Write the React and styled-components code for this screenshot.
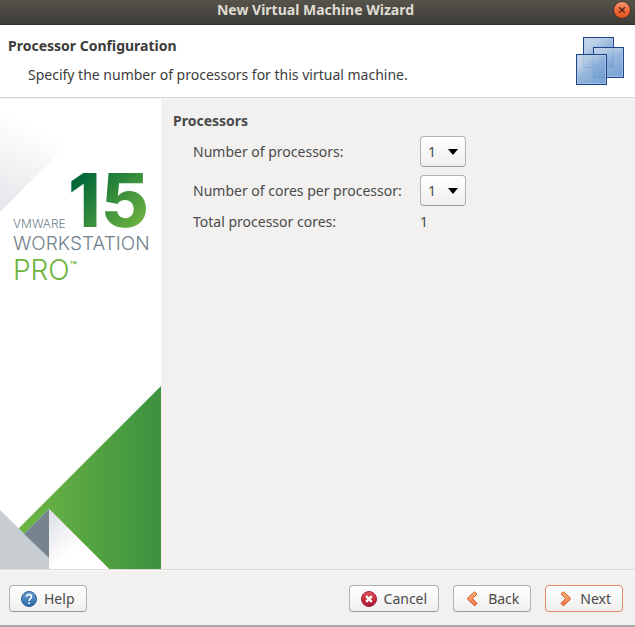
import React from "react";
import styled, { createGlobalStyle, css } from "styled-components";

const GlobalStyle = createGlobalStyle`
  *, *::before, *::after { box-sizing: border-box; }
  body {
    margin: 0;
    background: #f2f1f0;
    color: #4a4a4a;
    font: 14px/20px "Noto Sans", "Open Sans", sans-serif;
  }
`;

const Window = styled.div`
  display: flex;
  flex-direction: column;
  min-height: 100vh;
  border-bottom: 2px solid #a9a8a7;
`;

const TitleBar = styled.header`
  display: grid;
  grid-template-columns: 18px 1fr 22px;
  align-items: center;
  height: 25px;
  padding-bottom: 4px;
  background: linear-gradient(#56534b, #3e3d38);
  border-bottom: 1px solid #33322e;
`;

const Title = styled.h1`
  grid-column: 2;
  margin: 0;
  color: #dfdbd2;
  font-size: 14px;
  line-height: 20px;
  text-align: center;
`;

const CloseButton = styled.button`
  display: flex;
  width: 18px;
  height: 18px;
  padding: 0;
  border: 0;
  background: none;
`;

const Banner = styled.section`
  display: flex;
  justify-content: space-between;
  align-items: center;
  height: 73px;
  padding: 0 10px 0 8px;
  background: #fff;
  border-bottom: 1px solid #d9d8d6;
`;

const BannerText = styled.div`
  padding-bottom: 2px;
`;

const Heading = styled.h2`
  margin: 0;
  color: ${(p) => (p.$muted ? "#4a4a4a" : "#3c3c3c")};
  font-size: 14px;
  line-height: 20px;
`;

const Description = styled.p`
  margin: 9px 0 0 20px;
  color: #3c3c3c;
`;

const Body = styled.div`
  display: flex;
  flex: 1;
  padding-top: 1px;
`;

const Sidebar = styled.aside`
  position: relative;
  flex: none;
  width: 161px;
  padding: 69px 0 190px 13px;
  background: #fff;
`;

const FoldTop = styled.svg`
  position: absolute;
  top: 0;
  left: 0;
`;

const FoldBottom = styled.svg`
  position: absolute;
  bottom: 0;
  left: 0;
`;

const Brand = styled.div`
  position: relative;
  font-family: Inter, "Liberation Sans", sans-serif;
`;

const BrandRow = styled.div`
  display: flex;
  align-items: flex-end;
  justify-content: space-between;
  padding-right: 12px;
`;

const Vendor = styled.span`
  color: #717f8b;
  font-size: 12px;
  font-weight: 300;
  line-height: 16px;
`;

const Version = styled.span`
  color: transparent;
  background: linear-gradient(135deg, #006838 15%, #6db33f 90%);
  background-clip: text;
  font-size: 74px;
  font-weight: 800;
  line-height: 64px;
`;

const Product = styled.div`
  color: #717f8b;
  font-size: 19px;
  font-weight: 300;
  line-height: 24px;
`;

const Edition = styled.div`
  color: #6db33f;
  font-size: 28px;
  font-weight: 300;
  line-height: 28px;
`;

const Trademark = styled.sup`
  font-size: 12px;
  font-weight: 500;
  line-height: 12px;
  vertical-align: 10px;
`;

const Content = styled.main`
  flex: 1;
  padding: 12px;
`;

const Fields = styled.div`
  display: grid;
  grid-template-columns: 215px 1fr;
  grid-template-rows: auto auto 16px;
  gap: 8px 12px;
  align-items: center;
  margin: 5px 0 0 20px;
`;

const SelectBox = styled.div`
  display: grid;
  align-items: center;
  width: 46px;
  > * { grid-area: 1 / 1; }
  > svg { justify-self: end; margin-right: 8px; pointer-events: none; }
`;

const raised = css`
  background: linear-gradient(#fff, #f0efee);
  border: 1px solid #b3b1ae;
  border-bottom-color: #9c9a97;
  border-radius: 4px;
  color: #4a4a4a;
  font: inherit;
`;

const Select = styled.select`
  ${raised}
  appearance: none;
  width: 100%;
  height: 31px;
  padding: 0 7px;
`;

const Footer = styled.footer`
  display: flex;
  gap: 14px;
  padding: 15px 12px 13px 9px;
  border-top: 1px solid #d9d8d6;
  box-shadow: inset 0 1px #fbfbfa;
`;

const Button = styled.button`
  ${raised}
  display: flex;
  align-items: center;
  gap: 7px;
  height: 27px;
  padding: 0 11px;
  ${(p) => p.$primary && css`border-color: #dd8a6c;`}
  &:first-child { margin-right: auto; }
`;

function CloseIcon() {
  return (
    <svg width="18" height="18" viewBox="0 0 18 18" aria-hidden="true">
      <linearGradient id="close" x2="0" y2="1">
        <stop stopColor="#f79a78" />
        <stop offset="0.5" stopColor="#f06a3c" />
        <stop offset="1" stopColor="#e4511c" />
      </linearGradient>
      <circle cx="9" cy="9" r="8.5" fill="url(#close)" stroke="#3a2d25" />
      <path d="M6.2 6.2 11.8 11.8M11.8 6.2 6.2 11.8" stroke="#4a2415" strokeWidth="1.3" />
    </svg>
  );
}

function MachinesIcon() {
  return (
    <svg width="49" height="49" viewBox="0 0 49 49" aria-hidden="true">
      <linearGradient id="pane" x2="0.7" y2="1">
        <stop stopColor="#c2d4e8" />
        <stop offset="0.3" stopColor="#b4cbe4" />
        <stop offset="0.55" stopColor="#8bafd8" />
        <stop offset="1" stopColor="#6b9bd1" />
      </linearGradient>
      {[[7, 0], [17, 10], [0, 17]].map(([x, y]) => (
        <g key={x} transform={`translate(${x} ${y})`} fillOpacity="0.9">
          <rect x="0.5" y="0.5" width="30" height="30" fill="url(#pane)" stroke="#1d4587" />
          <rect x="1.5" y="1.5" width="28" height="28" fill="none" stroke="#b5cde8" strokeOpacity="0.6" />
        </g>
      ))}
    </svg>
  );
}

function HelpIcon() {
  return (
    <svg width="16" height="16" viewBox="0 0 16 16" aria-hidden="true">
      <linearGradient id="help" x2="0" y2="1">
        <stop stopColor="#6fa3d6" />
        <stop offset="1" stopColor="#2a64a3" />
      </linearGradient>
      <circle cx="8" cy="8" r="7.5" fill="url(#help)" stroke="#285c95" />
      <path d="M5.5 5.8C5.5 2.8 10.5 2.8 10.5 5.8 10.5 7.7 8 7.6 8 10" fill="none" stroke="#fff" strokeWidth="1.5" />
      <circle cx="8" cy="12.2" r="1" fill="#fff" />
    </svg>
  );
}

function CancelIcon() {
  return (
    <svg width="16" height="16" viewBox="0 0 16 16" aria-hidden="true">
      <linearGradient id="cancel" x2="0" y2="1">
        <stop stopColor="#e2575c" />
        <stop offset="0.5" stopColor="#cb2f3c" />
        <stop offset="1" stopColor="#a3153a" />
      </linearGradient>
      <circle cx="8" cy="8" r="7.5" fill="url(#cancel)" stroke="#a0203a" />
      <path d="M5.2 5.2 10.8 10.8M10.8 5.2 5.2 10.8" stroke="#fff" strokeWidth="2.4" />
    </svg>
  );
}

function ChevronIcon({ back }) {
  return (
    <svg width="16" height="16" viewBox="0 0 16 16" fill="none" strokeLinejoin="round" aria-hidden="true">
      <linearGradient id="chevron" x2="0" y2="1">
        <stop stopColor="#f6b77c" />
        <stop offset="1" stopColor="#f47a4a" />
      </linearGradient>
      <linearGradient id="chevronEdge" x2="0" y2="1">
        <stop stopColor="#d4662a" />
        <stop offset="1" stopColor="#cf3a1c" />
      </linearGradient>
      <path
        d={back ? "M9.6 .7 12 3 7.4 7.6 12 12.4 9.6 14.8 2.8 8.4V6.9Z" : "M6.4 .7 4 3 8.6 7.6 4 12.4 6.4 14.8 13.2 8.4V6.9Z"}
        fill="url(#chevron)"
        stroke="url(#chevronEdge)"
      />
    </svg>
  );
}

function Dropdown({ id }) {
  return (
    <SelectBox>
      <Select id={id} defaultValue="1">
        {[1, 2, 4, 8].map((n) => <option key={n}>{n}</option>)}
      </Select>
      <svg width="10" height="6" viewBox="0 0 10 6" aria-hidden="true">
        <path d="M0 0H10L5 6Z" fill="#000" />
      </svg>
    </SelectBox>
  );
}

function ProductArt() {
  return (
    <Sidebar>
      <FoldTop width="113" height="113" viewBox="0 0 113 113" aria-hidden="true">
        <linearGradient id="foldTop" gradientUnits="userSpaceOnUse" x1="0" y1="113" x2="40" y2="30">
          <stop stopColor="#e4e5e9" />
          <stop offset="1" stopColor="#fff" />
        </linearGradient>
        <path d="M0 0H113L0 113Z" fill="url(#foldTop)" />
      </FoldTop>
      <FoldBottom width="161" height="183" viewBox="0 0 161 183" aria-hidden="true">
        <linearGradient id="green">
          <stop stopColor="#6db644" />
          <stop offset="0.3" stopColor="#60ab43" />
          <stop offset="1" stopColor="#3c923f" />
        </linearGradient>
        <linearGradient id="foldBottom" x2="0.5" y2="0.6">
          <stop stopColor="#dcdde4" />
          <stop offset="1" stopColor="#fff" />
        </linearGradient>
        <path d="M161 0V183H109L49 123 24 148 18 143Z" fill="url(#green)" />
        <path d="M49 123 109 183H49Z" fill="url(#foldBottom)" />
        <path d="M0 124 49 172V183H0Z" fill="#c8cdd2" />
        <path d="M49 123V172L24 148Z" fill="#76848f" />
      </FoldBottom>
      <Brand>
        <BrandRow>
          <Vendor>VMWARE</Vendor>
          <Version>15</Version>
        </BrandRow>
        <Product>WORKSTATION</Product>
        <Edition>PRO<Trademark>™</Trademark></Edition>
      </Brand>
    </Sidebar>
  );
}

export default function App() {
  return (
    <Window>
      <GlobalStyle />
      <TitleBar>
        <Title>New Virtual Machine Wizard</Title>
        <CloseButton aria-label="Close"><CloseIcon /></CloseButton>
      </TitleBar>
      <Banner>
        <BannerText>
          <Heading>Processor Configuration</Heading>
          <Description>Specify the number of processors for this virtual machine.</Description>
        </BannerText>
        <MachinesIcon />
      </Banner>
      <Body>
        <ProductArt />
        <Content>
          <Heading as="h3" $muted>Processors</Heading>
          <Fields>
            <label htmlFor="processors">Number of processors:</label>
            <Dropdown id="processors" />
            <label htmlFor="cores">Number of cores per processor:</label>
            <Dropdown id="cores" />
            <span>Total processor cores:</span>
            <output htmlFor="processors cores">1</output>
          </Fields>
        </Content>
      </Body>
      <Footer>
        <Button type="button"><HelpIcon />Help</Button>
        <Button type="button"><CancelIcon />Cancel</Button>
        <Button type="button"><ChevronIcon back />Back</Button>
        <Button type="button" $primary><ChevronIcon />Next</Button>
      </Footer>
    </Window>
  );
}
